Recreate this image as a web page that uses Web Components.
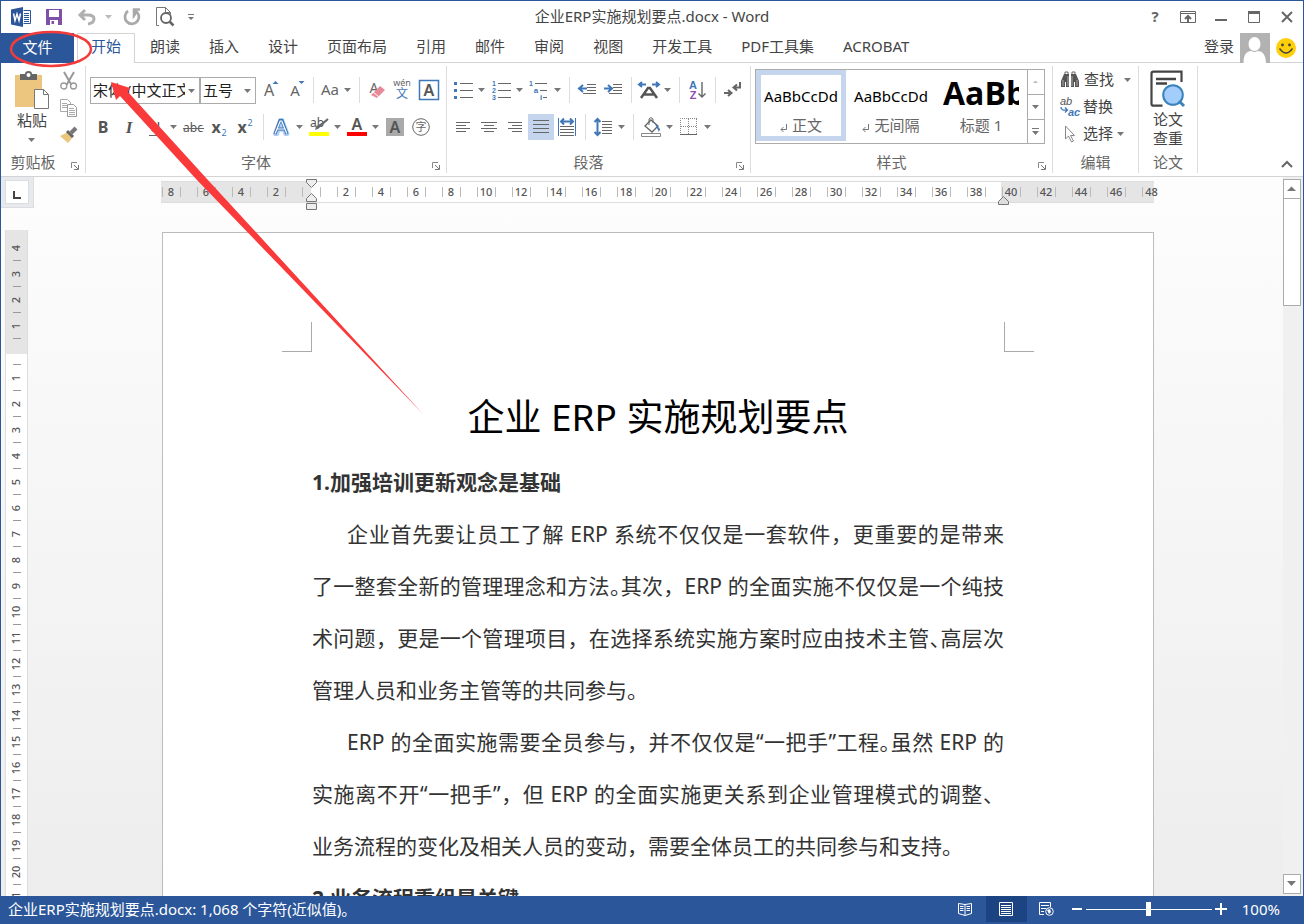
<!DOCTYPE html>
<html lang="zh-CN">
<head>
<meta charset="utf-8">
<title>企业ERP实施规划要点.docx - Word</title>
<style>
html,body{margin:0;height:100%}
body{font:15px/20px "Noto Sans","Noto Sans CJK SC",sans-serif;color:#444;background:#fff}
</style>
</head>
<body>
<word-app></word-app>
<script>
const G='#666', B='#3f77b8';
const letter=(x,y,size,t,fill=G,extra='')=>`<text x="${x}" y="${y}" font-size="${size}" fill="${fill}" text-anchor="middle" ${extra}>${t}</text>`;
const tiny='font-family="Liberation Sans" font-weight="700"';
const lines=(rows,c=G)=>`<g stroke="${c}">`+rows.map(([a,b,y])=>`<path d="M${a} ${y}.5H${b}"/>`).join('')+'</g>';
// name: [width, height, markup]
const ICONS={
 word:[20,20,`<path d="M0 2.5 12 0v20L0 17.5z" fill="#2b579a"/><path d="M12.5 3.5h7v13h-7M13 6.500h5M13 8.500h5M13 10.500h5M13 12.500h5M13 14.500h5" fill="none" stroke="#2b579a"/><path d="m2.500 6.500 1.500 7 2-6.500 2 6.500 1.500-7" fill="none" stroke="#fff" stroke-width="1.500"/>`],
 save:[16,16,`<path d="M0 0h16v16H0z" fill="#8050a8"/><path d="M3 1h10v7H3zM4 11h8v5H4z" fill="#fff"/><path d="M5.500 12h2.500v3H5.500z" fill="#8050a8"/>`],
 undo:[20,18,`<path d="M8 2 3 7l5 5M3 7h8q6 0 6 4t-6 5" fill="none" stroke="#b0b0b0" stroke-width="3"/>`],
 redo:[18,18,`<path d="M5 3a7 7 0 1 0 7-.5" fill="none" stroke="#aaa" stroke-width="2.800"/><path d="M10 1.500h7M11 .5v7l3-4" fill="none" stroke="#aaa" stroke-width="2.600"/>`],
 preview:[20,20,`<path d="M4 18.500H1.500V.5h9l5 5v2M10.500.5v5h5" fill="none" stroke="#777"/><circle cx="11" cy="11" r="5" fill="#fff" stroke="#666" stroke-width="1.800"/><path d="m14.500 14.500 4 4" stroke="#666" stroke-width="2.500"/>`],
 custom:[8,8,`<path d="M1 1.500h6" stroke="#777"/><path d="M1 4h6L4 7z" fill="#777"/>`],
 down:[8,8,`<path d="M0 2h7L3.500 6z" fill="#777"/>`],
 dim:[8,8,`<path d="M0 2h7L3.500 6z" fill="#bbb"/>`],
 display:[16,12,`<path d="M.5.5h15v11H.5zM.5 2.500h15" fill="none" stroke="#666"/><path d="M8 11V5M5 8l3-3 3 3" fill="none" stroke="#666" stroke-width="2"/>`],
 min:[12,12,`<path d="M0 8h12v2H0z" fill="#666"/>`],
 max:[12,12,`<path d="M.5 1.500h11v10H.5z" fill="none" stroke="#666"/><path d="M0 0h12v3H0z" fill="#666"/>`],
 close:[12,12,`<path d="m1 1 10 10M11 1 1 11" stroke="#666" stroke-width="2"/>`],
 help:[14,24,letter(7,17,15,'?','#666','font-weight="700"')],
 smile:[20,20,`<circle cx="10" cy="10" r="10" fill="#ffcf0a"/><circle cx="6.500" cy="7" r="1.400" fill="#444"/><circle cx="13.500" cy="7" r="1.400" fill="#444"/><path d="M3.500 10.500q6.500 9 13 0" fill="none" stroke="#444" stroke-width="1.300"/>`],
 avatar:[30,30,`<path d="M0 0h30v30H0z" fill="#b2b2b2"/><ellipse cx="14.500" cy="11" rx="6" ry="7" fill="#fff"/><path d="M3.500 30q0-12 8-12 3 2 6 0 8 0 8.500 12z" fill="#fff"/>`],
 paste:[36,38,`<path d="M1 4h27v32H1z" fill="#ecc57e"/><path d="M6 3h5q0-3 3.500-3T18 3h5v6H6z" fill="#666"/><circle cx="14.500" cy="4" r="2" fill="#fff"/><path d="M20.500 18.500h9l5 5v14h-14z" fill="#fff" stroke="#777"/><path d="M29.500 18.500v5h5" fill="none" stroke="#777"/>`],
 cut:[18,18,`<path d="M4 0l7.500 13M14 0 6.500 13" stroke="#999" stroke-width="2"/><circle cx="3.800" cy="14" r="3" fill="none" stroke="#999" stroke-width="1.300"/><circle cx="13.500" cy="14" r="3" fill="none" stroke="#999" stroke-width="1.300"/>`],
 copy:[18,18,`<path d="M.5.5h7l3 3v9H.5z" fill="#fff" stroke="#aaa"/><path d="M2 4.500h5M2 6.500h5M2 8.500h5" stroke="#aaa"/><path d="M7.500 5.500h6l3 3v9h-9z" fill="#fff" stroke="#999"/><path d="M9 9.500h5M9 11.500h6M9 13.500h6M9 15.500h6" stroke="#aaa"/>`],
 brush:[18,16,`<path d="m0 9 8-4 5 5-5 6z" fill="#ecc57e"/><path d="m7 4 6 6" stroke="#666" stroke-width="3"/><path d="m11 6 5-5" stroke="#777" stroke-width="4"/>`],
 grow:[18,20,letter(9,16,16,'A')+`<path d="M12.500 4h6L15.500 1z" fill="${B}"/>`],
 shrink:[18,20,letter(9,16,15,'A')+`<path d="M12.500 1h6l-3 3z" fill="${B}"/>`],
 caseaa:[22,20,letter(11,15,15,'Aa')],
 eraser:[18,20,letter(6,13,14,'A')+`<path d="m3 15 9-9 5 4-8 8z" fill="#e8899a"/><path d="m5 12 6 5" stroke="#fff"/>`],
 pinyin:[20,24,letter(9,8,9,'wén')+letter(9,20,12,'文',B)],
 border:[20,20,`<path d="M.5.5h19v19H.5z" fill="none" stroke="${B}" stroke-width="1.500"/>`+letter(10,16,16,'A','#555','font-weight="600"')],
 bold:[16,20,letter(8,16,16,'B','#555','font-weight="700"')],
 italic:[16,20,letter(8,16,17,'I','#555','font-weight="700" font-style="italic" font-family="Liberation Serif"')],
 under:[16,20,letter(8,15,15,'U','#555')+lines([[2,14,18]])],
 strike:[22,20,letter(11,15,12,'abc','#555')+lines([[1,22,11]])],
 sub:[18,20,letter(6,16,16,'x','#555','font-weight="700"')+letter(14,19,9,'2',B)],
 sup:[18,20,letter(6,16,16,'x','#555','font-weight="700"')+letter(14,9,9,'2',B)],
 effect:[18,20,letter(9,17,19,'A','#fff',`stroke="#aecdf0" stroke-width="4" stroke-linejoin="round"`)+`<path d="m3 17 5-13.500h2L15 17M5.500 12h7" fill="none" stroke="${B}" stroke-width="3.200"/><path d="m3.200 16.500 5-12.500h1.600l5 12.500M5.500 12h7" fill="none" stroke="#fff" stroke-width="1.200"/>`],
 hilite:[20,20,letter(8,10,12,'ab','#555')+`<path d="m19 3-10 9-3 1 1-4z" fill="#777"/><path d="m8 11 11-9" stroke="#666" stroke-width="2"/><path d="M0 15h20v4H0z" fill="#ff0"/>`],
 color:[20,20,letter(10,13,16,'A','#555','font-weight="600"')+`<path d="M0 15h20v4H0z" fill="red"/>`],
 shade:[18,18,`<path d="M0 0h18v18H0z" fill="#aaa"/>`+letter(9,15,16,'A','#555','font-weight="600"')],
 enclose:[18,18,`<circle cx="9" cy="9" r="8.300" fill="none" stroke="#666"/>`+letter(9,13,11,'字')],
 bullets:[19,19,`<path d="M0 1h3v3H0zM0 8h3v3H0zM0 15h3v3H0z" fill="${B}"/>`+lines([[6,19,2],[6,19,9],[6,19,16]])],
 numbers:[19,19,letter(2,5,7,'1',B,tiny)+letter(2,12,7,'2',B,tiny)+letter(2,19,7,'3',B,tiny)+lines([[6,19,2],[6,19,9],[6,19,16]])],
 multi:[20,19,letter(2,5,7,'1',B,tiny)+letter(7,12,8,'a',B,tiny)+letter(12,19,8,'i',B,tiny)+lines([[6,18,2],[11,18,9],[14,18,16]])],
 outdent:[19,14,lines([[9,18,1],[9,18,4],[9,18,7],[5,18,10]])+`<path d="M9 5.500H2M5 2 1 5.500 5 9" fill="none" stroke="${B}" stroke-width="2"/>`],
 indent:[19,14,lines([[9,18,1],[9,18,4],[9,18,7],[5,18,10]])+`<path d="M0 5.500h7M4 2l4 3.500L4 9" fill="none" stroke="${B}" stroke-width="2"/>`],
 scale:[22,18,`<path d="m3 17 7-10h2l7 10M6 13.500h10" fill="none" stroke="#555" stroke-width="2.500"/><path d="M1 3.500h7M4 1 1 3.500 4 6M14 3.500h7M18 1l3 2.500L18 6" fill="none" stroke="${B}" stroke-width="2"/>`],
 sort:[18,20,letter(5,9,11,'A',B,tiny)+letter(5,19,11,'Z','#8f4db0',tiny)+`<path d="M14 2v15M10.500 13.500 14 17l3.500-3.500" fill="none" stroke="#666" stroke-width="1.400"/>`],
 mark:[18,16,`<path d="M16 0v5.500h-6M13 2.500 9.500 5.500l3.500 3M0 11h7M4 8l3.500 3L4 14" fill="none" stroke="#666" stroke-width="2"/>`],
 left:[14,12,lines([[0,14,1],[0,10,4],[0,14,7],[0,10,10]])],
 center:[16,12,lines([[0,16,1],[3,13,4],[0,16,7],[3,13,10]])],
 right:[14,12,lines([[0,14,1],[4,14,4],[0,14,7],[4,14,10]])],
 justify:[16,14,lines([[0,16,0],[0,16,4],[0,16,8],[0,16,12]])],
 distribute:[18,18,`<path d="M.5 0v18M17.500 0v18" stroke="${B}"/><path d="M3 3.500h12M6 .5l-3 3 3 3M12 .5l3 3-3 3" fill="none" stroke="${B}" stroke-width="2"/>`+lines([[2,16,8],[2,16,11],[2,16,14],[2,16,17]])],
 spacing:[18,18,lines([[8,18,3],[8,18,6],[8,18,9],[8,18,12],[8,18,15]])+`<path d="M3.500 1v16M.5 4l3-3 3 3M.5 14l3 3 3-3" fill="none" stroke="${B}" stroke-width="2"/>`],
 bucket:[20,20,`<path d="m4 9 6-6 7 6-6 6z" fill="#fff" stroke="#666" stroke-width="1.300"/><path d="M8 8V2q2-3 4 0v4" fill="none" stroke="#666"/><path d="m13 5 6 7-1 3-2-4z" fill="${B}"/><path d="M.5 16.500h19v3H.5z" fill="#fff" stroke="#888"/>`],
 borders:[18,18,`<path d="M.5 17V.5H17M16.500 1v15M8.500 1v16M1 8.500h16" fill="none" stroke="#888" stroke-dasharray="1 1"/><path d="M0 16.500h17" stroke="#666"/>`],
 find:[18,18,`<path d="M0 16V10L3 3h5v13H5v-5H4v5zM18 16V10l-3-7h-5v13h3v-5h1v5z" fill="#555"/><path d="M4 3V1h3v2M11 3V1h3v2" stroke="#666" fill="none"/><path d="M2 9v6M7 5v10M11 5v10M16 9v6" stroke="#aaa"/>`],
 replace:[20,20,letter(6,8,11,'ab','#555','font-family="Liberation Sans"')+letter(14,19,11,'ac',B,tiny)+`<path d="M1 10q0 4 6 3M5 10.500l2.500 2.500L5 15.500" fill="none" stroke="${B}" stroke-width="1.300"/>`],
 select:[12,18,`<path d="M1.500 1v13l3-3 3 6 2-1-3-5.500h4z" fill="#fff" stroke="#888"/>`],
 paper:[36,38,`<path d="M31.500 12V1.700H3.500q-2 0-2 2v30q0 2 2 2h9" fill="none" stroke="#444" stroke-width="2.200"/><path d="M6 9h20M6 13.500h11" stroke="#444" stroke-width="2.500"/><circle cx="23" cy="25" r="9.800" fill="#a3cdfa" stroke="#3a82bb" stroke-width="2"/><path d="m29 31 5 5" stroke="#3a82bb" stroke-width="3"/>`],
 launch:[8,8,`<path d="M.5 6V.5H6" fill="none" stroke="#888"/><path d="m3 3 4 4M7.500 3v4.500H3" fill="none" stroke="#777"/>`],
 collapse:[12,8,`<path d="m1 7 5-5 5 5" fill="none" stroke="#666" stroke-width="2"/>`],
 up:[10,6,`<path d="M0 5h9L4.500.5z" fill="#777"/>`],
 tridown:[10,6,`<path d="M0 0h9L4.500 5z" fill="#777"/>`],
 more:[8,8,`<path d="M0 .5h7" stroke="#777"/><path d="M0 3h7L3.500 7z" fill="#777"/>`],
 faint:[8,8,`<path d="M1 5h5L3.500 2.500z" fill="#bbb"/>`],
 ret:[8,8,`<path d="M6.500 0v5.500H1M3.500 3 1 5.500 3.500 8" fill="none" stroke="#777"/>`],
 read:[14,14,`<path d="M.5 1.500 7 2.500l6.500-1v10L7 13.500.5 11.500zM7 2v11" fill="none" stroke="#fff"/><path d="M2 4.500h3.500M2 6.500h3.500M2 8.500h3.500M8.500 4.500H12M8.500 6.500H12M8.500 8.500H12" stroke="#fff"/>`],
 print:[14,14,`<path d="M.5.5h13v13H.5zM2 3.500h10M2 5.500h10M2 7.500h10M2 9.500h10M2 11.500h10" fill="none" stroke="#fff"/>`],
 web:[16,14,`<path d="M5 12.500H.5v-12h11V5M2 3.500h8M2 6.500h5M2 9.500h3" fill="none" stroke="#fff"/><circle cx="10.500" cy="9.500" r="3.800" fill="#2b579a" stroke="#fff"/><path d="m8 8 3-1 1 3-2 2zM12 7l2 3" fill="#fff"/>`],
 minus:[10,10,`<path d="M0 4h10v2H0z" fill="#fff"/>`],
 plus:[12,12,`<path d="M0 5h12v2H0zM5 0h2v12H5z" fill="#fff"/>`],
 tabstop:[8,8,`<path d="M1 0v7h7" fill="none" stroke="#444" stroke-width="2"/>`]
};
const svg=n=>{const[w,h,m]=ICONS[n];return `<svg width="${w}" height="${h}" viewBox="0 0 ${w} ${h}" aria-hidden="true">${m}</svg>`};
const define=(name,render)=>customElements.define(name,class extends HTMLElement{
  connectedCallback(){ if(!this.shadowRoot) this.attachShadow({mode:'open'}).innerHTML=render(this); }
});
const RESET=`*{box-sizing:border-box}button{font:inherit;color:inherit;background:none;border:0;padding:0;margin:0}svg{display:block;flex:none;overflow:visible}`;

// Icon-only button; width comes from --w, "drop" adds a drop-down arrow
define('tool-button',e=>`<style>${RESET}
:host{display:flex;flex:none}
button{display:flex;align-items:center;justify-content:center;width:var(--w,26px);height:var(--h,26px);background:var(--bg,none)}
button.drop{width:12px}</style>
<button aria-label="${e.getAttribute('label')}">${svg(e.getAttribute('icon'))}</button>${e.hasAttribute('drop')?`<button class="drop" aria-label="${e.getAttribute('label')}选项">${svg(e.getAttribute('drop')||'down')}</button>`:''}`);

define('svg-icon',e=>`<style>:host{display:block;flex:none}svg{display:block}</style>${svg(e.getAttribute('name'))}`);

define('tool-separator',()=>`<style>:host{display:block;flex:none;width:10px;height:26px;background:linear-gradient(#dcdcdc,#dcdcdc) center/1px 100% no-repeat}</style>`);

define('title-bar',()=>`<style>${RESET}
:host{display:grid;grid-template-columns:1fr auto 1fr;align-items:center;height:32px;flex:none}
nav{display:flex;align-items:center;padding-left:3px;--w:33px}
.end{justify-content:flex-end;padding:0}
h1{font:inherit;margin:0;padding-bottom:2px}</style>
<nav><tool-button icon="word" label="Word"></tool-button><tool-button icon="save" label="保存"></tool-button><tool-button icon="undo" label="撤消" drop="dim"></tool-button><tool-button icon="redo" label="重复"></tool-button><tool-button icon="preview" label="打印预览"></tool-button><tool-button icon="custom" label="自定义快速访问工具栏" style="--w:20px"></tool-button></nav>
<h1>企业ERP实施规划要点.docx - Word</h1>
<nav class="end"><tool-button icon="help" label="帮助"></tool-button><tool-button icon="display" label="功能区显示选项"></tool-button><tool-button icon="min" label="最小化"></tool-button><tool-button icon="max" label="最大化"></tool-button><tool-button icon="close" label="关闭"></tool-button></nav>`);

define('ribbon-tabs',()=>`<style>${RESET}
:host{display:flex;height:30px;flex:none;box-shadow:inset 0 -1px #d4d4d4}
nav{display:flex;flex:1;gap:1px}
button{padding:0 14px 5px;height:30px;white-space:nowrap}
.file{width:73px;background:#2b579a;color:#fff;margin-right:2px;padding:0 0 3px}
.on{background:#fff;border:1px solid #d4d4d4;border-bottom:0;color:#2b579a;padding:0 13px 5px}
.user{display:flex;align-items:center;gap:6px;padding-right:7px}
a{color:#444;text-decoration:none;padding-bottom:4px}</style>
<nav><button class="file">文件</button><button class="on">开始</button>${['朗读','插入','设计','页面布局','引用','邮件','审阅','视图','开发工具','PDF工具集','ACROBAT'].map(t=>`<button>${t}</button>`).join('')}</nav>
<div class="user"><a href="#login">登录</a><svg-icon name="avatar"></svg-icon><svg-icon name="smile"></svg-icon></div>`);

// A labelled ribbon group with an optional dialog launcher
define('ribbon-group',e=>`<style>${RESET}
:host{display:flex;flex-direction:column;flex:none;height:107px;margin-top:3px;border-right:1px solid #dcdcdc;position:relative}
.body{flex:1;display:flex;min-height:0}
footer{height:22px;line-height:22px;text-align:center;color:#666}
:host([launch]) footer{padding-right:20px}
tool-button{position:absolute;right:4px;bottom:1px;--w:12px;--h:12px}</style>
<div class="body"><slot></slot></div><footer>${e.getAttribute('label')}</footer>${e.hasAttribute('launch')?`<tool-button icon="launch" label="${e.getAttribute('label')}对话框"></tool-button>`:''}`);

define('combo-box',e=>`<style>${RESET}
:host{display:flex;position:relative;width:var(--w);height:27px;border:1px solid #ababab;flex:none}
select{appearance:none;border:0;background:none;font:inherit;color:#222;width:100%;padding:0 14px 0 2px;margin:0;outline:0}
svg-icon{position:absolute;right:3px;top:9px;pointer-events:none}</style>
<select aria-label="${e.getAttribute('label')}"><option>${e.getAttribute('value')}</option></select><svg-icon name="down"></svg-icon>`);

define('style-card',e=>`<style>${RESET}
:host{display:block;flex:none;width:90px;height:71px}
button{width:100%;height:100%;border:5px solid transparent;overflow:hidden;display:flex;flex-direction:column;padding:4px 2px 0;text-align:left}
:host([selected]) button{border-color:#c5d5ee}
.sample{color:#000;height:35px;line-height:34px;width:100%;white-space:nowrap;overflow:hidden;text-align:center}
:host([big]) .sample{font:700 32px/28px "Open Sans",sans-serif;text-align:left}
.name{display:flex;align-items:center;justify-content:center;gap:4px;width:100%;color:#666;line-height:22px}
.name svg{margin-top:6px}</style>
<button><span class="sample">${e.getAttribute('sample')}</span><span class="name">${e.hasAttribute('big')?'':svg('ret')}${e.getAttribute('name')}</span></button>`);

define('ribbon-bar',()=>`<style>${RESET}
:host{display:flex;height:114px;flex:none;border-bottom:1px solid #d4d4d4}
.rows{display:flex;flex-direction:column;gap:11px;padding:11px 4px 0 3px}
.rows.font{padding-left:4px}
.row{display:flex;height:26px;align-items:center}
.clip{display:flex;gap:6px;padding:5px 0 0 13px}
.big{display:flex;flex-direction:column;align-items:center;line-height:19px;width:36px}
.paste{gap:2px;height:78px}
.paste svg:last-child{margin-top:4px}
.small{display:flex;flex-direction:column;--w:26px;--h:27px;margin-top:-4px}
.gallery{display:flex;height:75px;margin:3px 6px 0 4px;border:1px solid #ababab}
.scroll{display:flex;flex-direction:column;width:17px;margin-left:1px;border-left:1px solid #ababab;--w:16px;--h:24px}
.scroll tool-button+tool-button{border-top:1px solid #ababab}
.edit{display:flex;flex-direction:column;width:86px}
.edit button{display:flex;align-items:center;gap:4px;height:27px;padding-left:8px;white-space:nowrap}
.edit button:first-child{gap:4px 5px}
.edit span{line-height:20px;padding-bottom:2px}
.edit .wide{padding-right:5px}
.edit i{display:flex;width:18px;justify-content:center}
.paper{padding:4px 11px 0;width:59px}
.paper button{gap:2px}
.collapse{margin-left:auto;align-self:flex-end;--w:33px;--h:24px}</style>
<ribbon-group label="剪贴板" launch style="width:85px"><div class="clip"><button class="big paste">${svg('paste')}<span>粘贴</span>${svg('down')}</button><div class="small"><tool-button icon="cut" label="剪切"></tool-button><tool-button icon="copy" label="复制"></tool-button><tool-button icon="brush" label="格式刷"></tool-button></div></div></ribbon-group>
<ribbon-group label="字体" launch style="width:361px"><div class="rows font">
<div class="row"><combo-box label="字体" value="宋体 (中文正文)" style="--w:110px"></combo-box><combo-box label="字号" value="五号" style="--w:56px"></combo-box><tool-button icon="grow" label="增大字号"></tool-button><tool-button icon="shrink" label="减小字号"></tool-button><tool-separator></tool-separator><tool-button icon="caseaa" label="更改大小写" drop style="--w:24px"></tool-button><tool-separator></tool-separator><tool-button icon="eraser" label="清除格式"></tool-button><tool-button icon="pinyin" label="拼音指南"></tool-button><tool-button icon="border" label="字符边框"></tool-button></div>
<div class="row"><tool-button icon="bold" label="加粗"></tool-button><tool-button icon="italic" label="倾斜"></tool-button><tool-button icon="under" label="下划线" drop></tool-button><tool-button icon="strike" label="删除线"></tool-button><tool-button icon="sub" label="下标"></tool-button><tool-button icon="sup" label="上标"></tool-button><tool-separator></tool-separator><tool-button icon="effect" label="文本效果" drop></tool-button><tool-button icon="hilite" label="突出显示" drop></tool-button><tool-button icon="color" label="字体颜色" drop></tool-button><tool-button icon="shade" label="字符底纹"></tool-button><tool-button icon="enclose" label="带圈字符"></tool-button></div></div></ribbon-group>
<ribbon-group label="段落" launch style="width:304px"><div class="rows">
<div class="row"><tool-button icon="bullets" label="项目符号" drop></tool-button><tool-button icon="numbers" label="编号" drop></tool-button><tool-button icon="multi" label="多级列表" drop></tool-button><tool-separator></tool-separator><tool-button icon="outdent" label="减少缩进量"></tool-button><tool-button icon="indent" label="增加缩进量"></tool-button><tool-separator></tool-separator><tool-button icon="scale" label="中文版式" drop></tool-button><tool-separator></tool-separator><tool-button icon="sort" label="排序"></tool-button><tool-separator></tool-separator><tool-button icon="mark" label="显示编辑标记"></tool-button></div>
<div class="row"><tool-button icon="left" label="左对齐"></tool-button><tool-button icon="center" label="居中"></tool-button><tool-button icon="right" label="右对齐"></tool-button><tool-button icon="justify" label="两端对齐" style="--bg:#c5d5ee"></tool-button><tool-button icon="distribute" label="分散对齐"></tool-button><tool-separator></tool-separator><tool-button icon="spacing" label="行距" drop></tool-button><tool-separator></tool-separator><tool-button icon="bucket" label="底纹" drop></tool-button><tool-button icon="borders" label="边框" drop></tool-button></div></div></ribbon-group>
<ribbon-group label="样式" launch style="width:302px"><div class="gallery"><style-card sample="AaBbCcDd" name="正文" selected></style-card><style-card sample="AaBbCcDd" name="无间隔"></style-card><style-card sample="AaBbCcDd" name="标题 1" big></style-card><div class="scroll"><tool-button icon="faint" label="上一行"></tool-button><tool-button icon="down" label="下一行"></tool-button><tool-button icon="more" label="其他"></tool-button></div></div></ribbon-group>
<ribbon-group label="编辑" style="width:86px"><div class="edit"><button><i>${svg('find')}</i><span class="wide">查找</span>${svg('down')}</button><button><i>${svg('replace')}</i><span>替换</span></button><button><i>${svg('select')}</i><span>选择</span>${svg('down')}</button></div></ribbon-group>
<ribbon-group label="论文" style="width:59px"><div class="paper"><button class="big">${svg('paper')}<span>论文<br>查重</span></button></div></ribbon-group>
<tool-button class="collapse" icon="collapse" label="折叠功能区"></tool-button>`);

const H=[8,6,4,2,'',...Array.from({length:24},(_,i)=>2*i+2)];
define('ruler-across',()=>`<style>${RESET}
:host{display:block;position:relative;width:995px;height:23px;margin:4px auto 0;font-size:11px;color:#555}
.bar{display:flex;width:993px;height:22px;border-bottom:1px solid #ddd;border-top:1px solid #ddd;background:linear-gradient(90deg,#e5e5e5 150px,#fff 150px 840px,#e5e5e5 840px)}
span{flex:none;width:35px;display:flex;justify-content:center;align-items:center}
span:first-child{margin-left:-7px}
b{font-weight:500;width:19px;height:10px;line-height:10px;border:solid #bbb;border-width:0 1px;display:flex;justify-content:center}
span:last-child b{border-right:0}
svg{position:absolute}
.first{left:145px;top:-2px}.last{left:837px;top:15px}</style>
<div class="bar">${H.map(n=>`<span><b>${n}</b></span>`).join('')}</div>
<svg class="first" width="12" height="32"><path d="M.5.500h10v3l-5 5-5-5zM.5 22.500v-3l5-5 5 5v3zM.5 24.500h10v6H.5z" fill="#eee" stroke="#777"/></svg>
<svg class="last" width="12" height="10"><path d="M.5 8.500v-3l5-5 5 5v3z" fill="#ddd" stroke="#777"/></svg>`);

const V=[4,3,2,1,'',...Array.from({length:21},(_,i)=>i+1)];
define('ruler-down',()=>`<style>${RESET}
:host{display:flex;flex-direction:column;flex:none;width:23px;padding-top:5px;border:solid #ddd;border-width:0 1px;font-size:11px;color:#555;background:linear-gradient(#e5e5e5 124px,#fff 124px)}
span{flex:none;height:26px;display:flex;align-items:center;justify-content:center;background:linear-gradient(#999,#999) center bottom/8px 1px no-repeat}
b{font-weight:500;line-height:12px;transform:rotate(-90deg)}</style>${V.map(n=>`<span><b>${n}</b></span>`).join('')}`);

define('tab-selector',()=>`<style>${RESET}
:host{display:block;flex:none;width:33px;height:31px;background:#e6e9ee;border:solid #ddd;border-width:0 1px 1px 0}
button{display:flex;align-items:center;justify-content:center;width:24px;height:24px;margin:3px 0 0 4px;background:#fff;border:1px solid #ddd;padding-top:6px}</style>
<button aria-label="制表符">${svg('tabstop')}</button>`);

define('page-scrollbar',()=>`<style>${RESET}
:host{display:flex;flex-direction:column;padding:2px 2px 2px 0;background:linear-gradient(90deg,transparent 1px,#f0f0f0 1px)}
div{display:flex;flex-direction:column;flex:1;margin-left:1px}
button{display:flex;align-items:center;justify-content:center;height:20px;background:#fff;border:1px solid #ababab}
.thumb{height:108px;margin-top:-1px;margin-bottom:auto}</style>
<div><button aria-label="向上滚动">${svg('up')}</button><button class="thumb" aria-label="滚动块"></button><button aria-label="向下滚动">${svg('tridown')}</button></div>`);

define('document-page',()=>`<style>${RESET}
:host{display:block;position:relative;width:992px;height:1400px;margin:28px auto 0;padding:145px 149px 0;background:#fff;border:1px solid #bcbcbc;color:#333;font-size:21px;line-height:52px}
h1{font-size:37px;font-weight:400;line-height:78px;margin:0;color:#000;text-align:center;white-space:nowrap}
h2{font-size:21px;font-weight:700;margin:0}
p{margin:0;padding:0}
span{display:block;text-align:justify;text-align-last:justify;white-space:nowrap}
span.in{padding-left:35px}
span.end{text-align-last:left}
i{font-style:normal;font-feature-settings:"halt"}
.crop{position:absolute;top:89px;width:30px;height:30px;border:solid #aaa;border-width:0 1px 1px 0}
.l{left:119px}.r{right:119px;border-width:0 0 1px 1px}</style>
<div class="crop l"></div><div class="crop r"></div>
<h1>企业 ERP 实施规划要点</h1>
<h2>1.加强培训更新观念是基础</h2>
<p><span class="in">企业首先要让员工了解 ERP 系统不仅仅是一套软件，更重要的是带来</span><span>了一整套全新的管理理念和方法<i>。</i>其次，ERP 的全面实施不仅仅是一个纯技</span><span>术问题，更是一个管理项目，在选择系统实施方案时应由技术主管<i>、</i>高层次</span><span class="end">管理人员和业务主管等的共同参与。</span></p>
<p><span class="in">ERP 的全面实施需要全员参与，并不仅仅是“一把手”工程<i>。</i>虽然 ERP 的</span><span>实施离不开“一把手”，但 ERP 的全面实施更关系到企业管理模式的调整、</span><span class="end">业务流程的变化及相关人员的变动，需要全体员工的共同参与和支持。</span></p>
<h2>2.业务流程重组是关键</h2>`);

define('work-area',()=>`<style>${RESET}
:host{display:grid;grid-template-columns:33px minmax(0,1fr) 21px;grid-template-rows:minmax(0,1fr);flex:1;min-height:0;overflow:hidden;background:linear-gradient(#fdfdfd,#ededed)}
aside{display:flex;flex-direction:column;overflow:hidden}
ruler-down{margin:22px 0 0 4px}
main{overflow:hidden}</style>
<aside><tab-selector></tab-selector><ruler-down></ruler-down></aside>
<main><ruler-across></ruler-across><document-page></document-page></main>
<page-scrollbar></page-scrollbar>`);

define('status-bar',()=>`<style>${RESET}
:host{display:flex;align-items:center;flex:none;height:28px;padding:0 24px 2px 8px;background:#2b579a;color:#fff;margin:0 -1px -1px;--w:41px}
p{margin:0 auto 0 0}
input{appearance:none;width:126px;height:14px;margin:0;background:linear-gradient(#fff,#fff) center/100% 1px no-repeat;outline:0}
input::-webkit-slider-thumb{appearance:none;width:5px;height:14px;background:#fff}
output{margin-left:12px}
.zoom{--w:18px}
.on{--bg:#1c4483}</style>
<p>企业ERP实施规划要点.docx: 1,068 个字符(近似值)。</p>
<tool-button icon="read" label="阅读视图"></tool-button><tool-button class="on" icon="print" label="页面视图"></tool-button><tool-button icon="web" label="Web 版式视图"></tool-button>
<tool-button class="zoom" icon="minus" label="缩小"></tool-button><input type="range" aria-label="显示比例" min="0" max="200" value="100"><tool-button class="zoom" icon="plus" label="放大"></tool-button><output>100%</output>`);

// Hand-drawn pointers laid over the window
define('ink-marks',()=>`<style>:host{position:absolute;left:-1px;top:-1px;pointer-events:none}svg{display:block}</style>
<svg width="430" height="420" aria-hidden="true"><ellipse cx="51" cy="49" rx="40" ry="17" fill="none" stroke="#f23c3c" stroke-width="2.500"/><path d="m111 82 19 6-2 4 79 87 217 236-227-235-77-84-4 4z" fill="#fa3a3a"/></svg>`);

define('word-app',()=>`<style>*{box-sizing:border-box}
:host{display:flex;flex-direction:column;height:100vh;box-sizing:border-box;border:1px solid #2b579a;position:relative;overflow:hidden}</style>
<title-bar></title-bar><ribbon-tabs></ribbon-tabs><ribbon-bar></ribbon-bar><work-area></work-area><status-bar></status-bar><ink-marks></ink-marks>`);
</script>
</body>
</html>
